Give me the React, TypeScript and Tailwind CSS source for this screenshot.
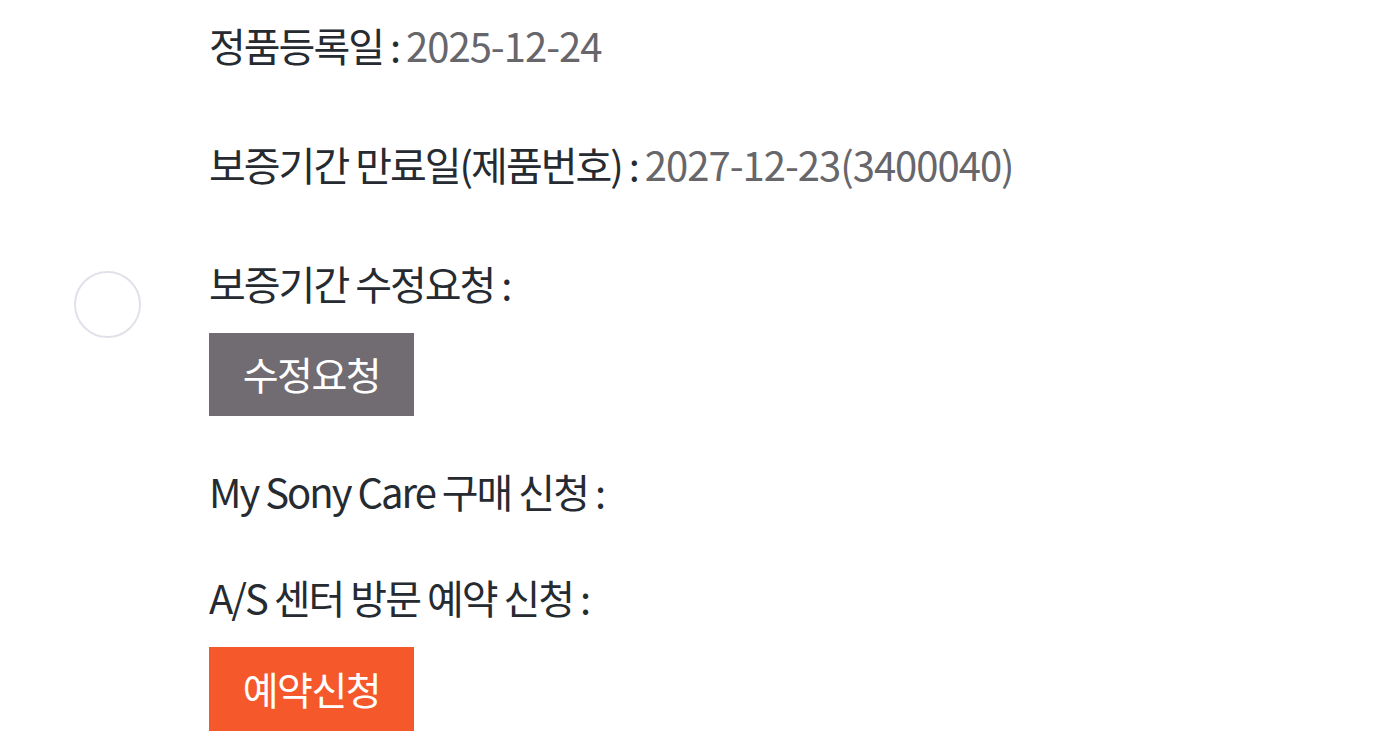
export default function App() {
  const font = { fontFamily: '"Noto Sans CJK KR", "Noto Sans", sans-serif' };
  const label = "h-[60px] text-[40px] leading-[60px] tracking-[-2px] text-[#262b32]";
  const value = "tracking-[-1px] text-[#67666b]";
  return (
    <main className="min-h-screen w-full bg-white" style={font}>
      <div className="relative pl-[209px] pt-[15px]">
        <div className="absolute left-[74px] top-[271px] h-[67px] w-[67px] rounded-full border-2 border-[#e2e1e9] bg-white" />
        <p className={label}>
          정품등록일 : <span className={value}>2025-12-24</span>
        </p>
        <p className={`mt-[59px] ${label}`}>
          보증기간 만료일(제품번호) : <span className={value}>2027-12-23(3400040)</span>
        </p>
        <p className={`mt-[59px] ${label}`}>보증기간 수정요청 :</p>
        <button className="mt-[20px] flex h-[83px] w-[205px] items-center justify-center bg-[#716c72] pb-[2px] text-[39px] tracking-[-1.5px] text-white">
          수정요청
        </button>
        <p className={`mt-[45px] ${label}`}>My Sony Care 구매 신청 :</p>
        <p className={`mt-[46px] ${label}`}>A/S 센터 방문 예약 신청 :</p>
        <button className="mt-[20px] flex h-[84px] w-[205px] items-center justify-center bg-[#f5582a] pb-[2px] text-[39px] tracking-[-1.5px] text-white">
          예약신청
        </button>
      </div>
    </main>
  );
}
